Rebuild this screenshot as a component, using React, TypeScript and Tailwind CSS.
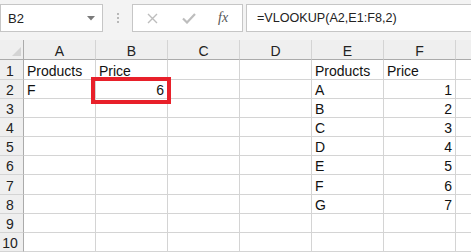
import React from "react";

const cols = ["A", "B", "C", "D", "E", "F", "G"];
const rowH = ["h-[20px]", "h-[19px]", "h-[19px]", "h-[19px]", "h-[19px]", "h-[19px]", "h-[20px]", "h-[19px]", "h-[19px]", "h-[19px]"];

type Cell = { t: string; r?: boolean };
const data: Record<number, Record<string, Cell>> = {
  1: { A: { t: "Products" }, B: { t: "Price" }, E: { t: "Products" }, F: { t: "Price" } },
  2: { A: { t: "F" }, B: { t: "6", r: true }, E: { t: "A" }, F: { t: "1", r: true } },
  3: { E: { t: "B" }, F: { t: "2", r: true } },
  4: { E: { t: "C" }, F: { t: "3", r: true } },
  5: { E: { t: "D" }, F: { t: "4", r: true } },
  6: { E: { t: "E" }, F: { t: "5", r: true } },
  7: { E: { t: "F" }, F: { t: "6", r: true } },
  8: { E: { t: "G" }, F: { t: "7", r: true } },
};

export default function App() {
  return (
    <div
      className="relative w-[471px] h-[252px] overflow-hidden bg-white text-[#1a1a1a]"
      style={{ fontFamily: '"Liberation Sans", Arial, sans-serif' }}
    >
      {/* Toolbar */}
      <div className="h-[40px] bg-[#f3f3f3] flex items-start pt-[4px]">
        <div className="w-[103px] h-[28px] bg-white border border-[#c6c6c6] flex items-center pl-[7px] pr-[7px] justify-between">
          <span className="text-[13px] leading-none text-[#222]">B2</span>
          <svg width="8" height="5" viewBox="0 0 8 5">
            <path d="M0 0 L8 0 L4 4.5 Z" fill="#7a7a7a" />
          </svg>
        </div>
        <div className="w-[29px] h-[28px] flex items-center justify-center">
          <div className="flex flex-col gap-[2px]">
            <span className="block w-[2px] h-[2px] bg-[#b8b8b8]" />
            <span className="block w-[2px] h-[2px] bg-[#b8b8b8]" />
            <span className="block w-[2px] h-[2px] bg-[#b8b8b8]" />
          </div>
        </div>
        <div className="w-[111px] h-[28px] bg-white border border-[#c6c6c6] flex items-center">
          <svg className="ml-[14px]" width="11" height="11" viewBox="0 0 11 11">
            <path d="M1 1 L10 10 M10 1 L1 10" stroke="#bdbdbd" strokeWidth="1.4" />
          </svg>
          <svg className="ml-[24px]" width="14" height="11" viewBox="0 0 14 11">
            <path d="M1 5.5 L5 9.5 L13 1" stroke="#bdbdbd" strokeWidth="2.2" fill="none" />
          </svg>
          <span
            className="ml-[22px] text-[14px] italic text-[#555] leading-none"
            style={{ fontFamily: '"Liberation Serif", "Times New Roman", serif' }}
          >
            fx
          </span>
        </div>
        <div className="ml-[3px] flex-1 h-[28px] bg-white border border-[#c6c6c6] border-r-0 flex items-center pl-[10px]">
          <span className="text-[12.6px] leading-none text-[#222]">=VLOOKUP(A2,E1:F8,2)</span>
        </div>
      </div>

      {/* Sheet */}
      <div className="grid grid-cols-[24px_72px_72px_72px_72px_72px_72px_72px] w-[528px]">
        {/* header row */}
        <div className="h-[20px] bg-[#efefef] border-r border-b border-[#ababab] relative">
          <svg className="absolute right-[2px] bottom-[3px]" width="9" height="9" viewBox="0 0 9 9">
            <path d="M9 0 L9 9 L0 9 Z" fill="#d4d4d4" />
          </svg>
        </div>
        {cols.map((c) => (
          <div
            key={c}
            className="h-[20px] bg-[#efefef] border-r border-r-[#d4d4d4] border-b border-b-[#ababab] flex items-end justify-center text-[14px] leading-[15px] text-[#222]"
          >
            {c === "G" ? "" : c}
          </div>
        ))}
        {rowH.map((h, i) => {
          const r = i + 1;
          return (
            <React.Fragment key={r}>
              <div
                className={`${h} bg-[#efefef] border-r border-r-[#ababab] border-b border-b-[#d4d4d4] flex items-end justify-center pr-[3px] text-[14px] leading-[15px] text-[#222]`}
              >
                {r}
              </div>
              {cols.map((c) => {
                const cell = data[r]?.[c];
                return (
                  <div
                    key={c}
                    className={`${h} border-r border-b border-[#d4d4d4] flex items-end px-[3px] text-[14px] leading-[15px] text-[#111] whitespace-nowrap ${
                      cell?.r ? "justify-end" : "justify-start"
                    }`}
                  >
                    {cell?.t ?? ""}
                  </div>
                );
              })}
            </React.Fragment>
          );
        })}
      </div>

      {/* Red annotation box */}
      <div className="absolute left-[91px] top-[77px] w-[80px] h-[27px] border-[4px] border-[#e8202a]" />
    </div>
  );
}
